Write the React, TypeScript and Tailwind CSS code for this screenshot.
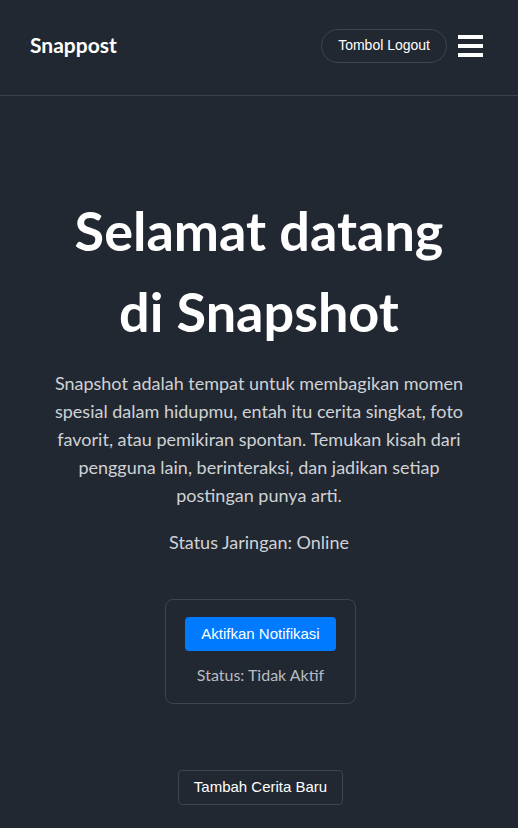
export default function App() {
  return (
    <div className="min-h-[828px] bg-[#222831] text-white" style={{ fontFamily: 'Lato, sans-serif' }}>
      <header className="flex h-24 items-center justify-between border-b border-[#3a3f48] pl-[30px] pr-[35px]">
        <div className="-mt-[6px] text-[21px] font-bold">Snappost</div>
        <div className="-mt-[4px] flex items-center gap-[11px]">
          <button className="h-[34px] rounded-full border border-[#3e434c] px-4 text-[14px] font-['Liberation_Sans',sans-serif] text-white">
            Tombol Logout
          </button>
          <svg width="25" height="22" viewBox="0 0 25 22">
            <rect x="0" y="0" width="25" height="4" fill="white" />
            <rect x="0" y="9" width="25" height="4" fill="white" />
            <rect x="0" y="18" width="25" height="4" fill="white" />
          </svg>
        </div>
      </header>

      <main className="flex flex-col items-center px-[40px] pt-[94px] text-center">
        <h1 className="text-[54px] font-bold leading-[81px]">
          Selamat datang
          <br />
          di Snapshot
        </h1>
        <p className="mt-[17px] text-[18px] leading-[28px] text-[#cfd2d6]">
          Snapshot adalah tempat untuk membagikan momen spesial dalam hidupmu, entah itu cerita singkat, foto favorit,
          atau pemikiran spontan. Temukan kisah dari pengguna lain, berinteraksi, dan jadikan setiap postingan punya
          arti.
        </p>
        <p className="mt-[19px] text-[18px] leading-[28px] text-[#cfd2d6]">Status Jaringan: Online</p>

        <div className="ml-[3px] mt-[43px] flex flex-col items-center rounded-lg border border-[#3e434c] px-[19px] pb-[16px] pt-[17px]">
          <button className="h-[34px] rounded bg-[#007bff] px-[16px] text-[15px] font-['Liberation_Sans',sans-serif] text-white">
            Aktifkan Notifikasi
          </button>
          <p className="mt-[12px] text-[16px] text-[#b8bcc2]">Status: Tidak Aktif</p>
        </div>

        <button className="ml-[3px] mt-[66px] h-[35px] rounded border border-[#3e434c] px-[15px] text-[15px] font-['Liberation_Sans',sans-serif] text-white">
          Tambah Cerita Baru
        </button>
      </main>
    </div>
  );
}
